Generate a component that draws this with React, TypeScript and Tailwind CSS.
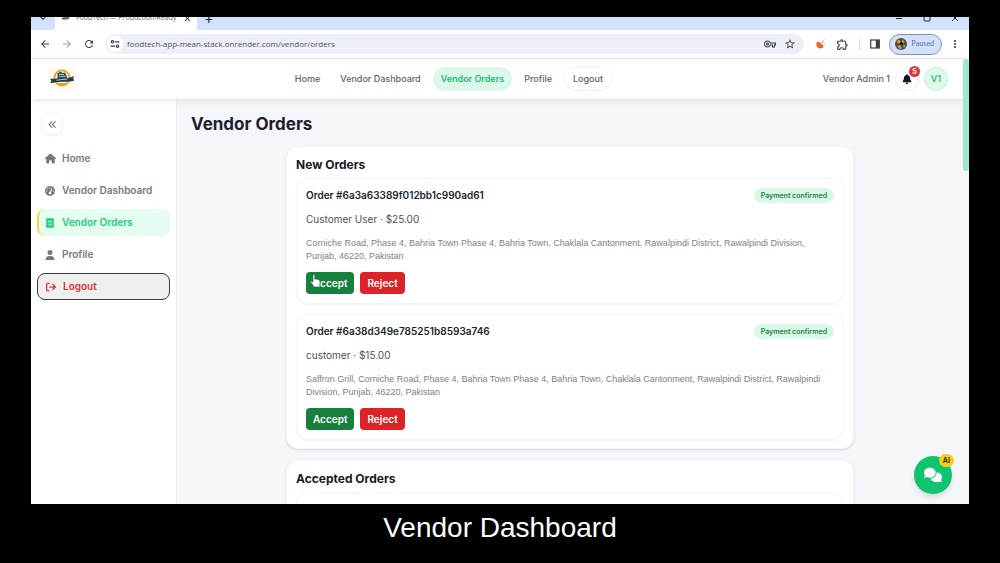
import type { ReactNode } from "react";
import {
  FaAnglesLeft,
  FaArrowRightFromBracket,
  FaBell,
  FaComments,
  FaGaugeHigh,
  FaHouse,
  FaReceipt,
  FaUser,
} from "react-icons/fa6";
import {
  MdArrowBack,
  MdArrowForward,
  MdClose,
  MdKeyboardArrowDown,
  MdMoreVert,
  MdOutlineExtension,
  MdOutlineVpnKey,
  MdRefresh,
  MdStarBorder,
} from "react-icons/md";

type Order = { id: string; customer: string; total: string; address: string };

const newOrders: Order[] = [
  {
    id: "6a3a63389f012bb1c990ad61",
    customer: "Customer User",
    total: "$25.00",
    address:
      "Corniche Road, Phase 4, Bahria Town Phase 4, Bahria Town, Chaklala Cantonment, Rawalpindi District, Rawalpindi Division, Punjab, 46220, Pakistan",
  },
  {
    id: "6a38d349e785251b8593a746",
    customer: "customer",
    total: "$15.00",
    address:
      "Saffron Grill, Corniche Road, Phase 4, Bahria Town Phase 4, Bahria Town, Chaklala Cantonment, Rawalpindi District, Rawalpindi Division, Punjab, 46220, Pakistan",
  },
];

const navLinks = ["Home", "Vendor Dashboard", "Vendor Orders", "Profile"];

const sideLinks = [
  { label: "Home", icon: <FaHouse size={11} /> },
  { label: "Vendor Dashboard", icon: <FaGaugeHigh size={10} /> },
  { label: "Vendor Orders", icon: <FaReceipt size={10} /> },
  { label: "Profile", icon: <FaUser size={10} /> },
];

function Logo({ className }: { className: string }) {
  return (
    <svg viewBox="0 0 28 24" className={className} aria-hidden="true">
      <rect width="28" height="24" fill="#fffbf2" />
      <circle cx="14" cy="11" r="7.6" fill="#fff7e0" stroke="#e9a11f" strokeWidth="1.8" />
      <path d="M9.5 6.500l3-2 2 1.500 2.500-.5 1.500 3 1 3h-10z" fill="#2b5365" />
      <path d="M11 7.500h5M11 9.300h6.500" stroke="#dfe9ec" strokeWidth=".7" />
      <path d="M2 11.500c4 .8 8-.8 12-.5s8 0 12-2l-.8 2.600 1 2c-4 1.400-8 1.200-12 1.200s-8 1-12 1.200l1.200-2.200z" fill="#1f3d4b" />
      <path d="M8.500 13.200c4-.8 7-.6 11-1.200" stroke="#c9d5da" strokeWidth=".9" fill="none" />
      <path d="M9.500 16h9l-2.500 2.300h-4z" fill="#e9a11f" />
    </svg>
  );
}

function TabStrip() {
  return (
    <div className="flex h-[13px] items-end overflow-hidden bg-[#d3e1fb] text-[#5f6368]">
      <div className="flex h-6 w-6 shrink-0 items-center justify-center rounded-br-lg bg-[#d3e1fb]">
        <MdKeyboardArrowDown size={12} className="text-[#30343a]" />
      </div>
      <div className="flex h-6 w-[142px] shrink-0 items-center gap-[6px] rounded-t-lg bg-white pr-[5px] pl-[6px]">
        <Logo className="h-2 w-[9px] shrink-0" />
        <span className="flex-1 font-['Open_Sans',sans-serif] text-[7px] leading-3 whitespace-nowrap">
          FoodTech — Production-Ready
        </span>
        <button type="button" aria-label="Close tab" className="text-[#202124]">
          <MdClose size={9} />
        </button>
      </div>
      <button type="button" aria-label="New tab" className="flex h-6 w-6 items-center justify-center text-sm leading-4 text-[#202124]">
        +
      </button>
      <div className="ml-auto flex h-6 items-center gap-[20px] pr-[10px] text-[#202124]">
        <svg width="8" height="8" viewBox="0 0 8 8" aria-hidden="true">
          <path d="M1 4.500h6" stroke="currentColor" />
        </svg>
        <svg width="8" height="8" viewBox="0 0 8 8" aria-hidden="true">
          <rect x="1" y="1" width="6" height="6" rx="1" fill="none" stroke="currentColor" />
        </svg>
        <svg width="8" height="8" viewBox="0 0 8 8" aria-hidden="true">
          <path d="M1 1l6 6M7 1l-6 6" stroke="currentColor" />
        </svg>
      </div>
    </div>
  );
}

function Toolbar() {
  return (
    <div className="flex h-[29px] items-center border-b border-[#eceef2] bg-white pr-2 pl-2 text-[#3c4043]">
      <div className="flex items-center gap-[10px]">
        <button type="button" aria-label="Back"><MdArrowBack size={12} /></button>
        <button type="button" aria-label="Forward" className="text-[#9aa0a6]"><MdArrowForward size={12} /></button>
        <button type="button" aria-label="Reload"><MdRefresh size={12} /></button>
      </div>
      <div className="ml-[10px] flex h-5 flex-1 items-center rounded-full bg-[#eceff8] pr-2 pl-[2px]">
        <span className="flex size-4 items-center justify-center rounded-full bg-white">
          <svg width="10" height="10" viewBox="0 0 10 10" fill="none" stroke="#3c4043" strokeWidth="1.200" aria-hidden="true">
            <circle cx="2.500" cy="2.800" r="1.200" />
            <path d="M5 2.800h4.500M.5 7.200H5" />
            <circle cx="7.500" cy="7.200" r="1.200" />
          </svg>
        </span>
        <input
          type="text"
          aria-label="Address"
          defaultValue="foodtech-app-mean-stack.onrender.com/vendor/orders"
          className="ml-1 min-w-0 flex-1 bg-transparent font-['Open_Sans',sans-serif] text-[8px] leading-3 text-[#50545a] outline-none"
        />
        <div className="flex items-center gap-2">
          <MdOutlineVpnKey size={12} />
          <MdStarBorder size={12} />
        </div>
      </div>
      <div className="ml-3 flex items-center gap-[10px]">
        <svg width="10" height="10" viewBox="0 0 10 10" aria-hidden="true">
          <path d="M1 3.200C2 2.200 3.500 2.600 4.300 3.800L6.200 5.800C7.600 6.200 8 7.600 7 8.600 5 10.400.6 9.400.3 5.800.2 4.600.4 3.800 1 3.200z" fill="#f0642c" />
          <path d="M5.600 4.600L8 2.200M5.500 1.200h1M8.600 4.400v1M8.500.8h.8" stroke="#f39a6c" strokeWidth="1.100" />
        </svg>
        <MdOutlineExtension size={13} />
        <span className="h-[11px] w-px bg-[#cdd9f5]" />
        <svg width="10" height="10" viewBox="0 0 10 10" aria-hidden="true">
          <rect x=".7" y="1" width="8.600" height="8" fill="none" stroke="currentColor" strokeWidth="1.200" />
          <path d="M5.800 1h3.500v8H5.800z" fill="currentColor" />
        </svg>
      </div>
      <button
        type="button"
        className="ml-[9px] flex h-[21px] items-center gap-1 rounded-full border border-[#7d91bb] bg-[#d3e1fb] pr-[7px] pl-[5px] font-['Liberation_Serif',serif] text-[8px] leading-3 text-[#5470a5]"
      >
        <svg width="12" height="12" viewBox="0 0 12 12" aria-hidden="true">
          <circle cx="6" cy="6" r="6" fill="#5c4a2a" />
          <path d="M1.500 3.500L4 1.500l2 2.500-2.500 1.500zM7 2l2.500 1L9 5.500 7 5z" fill="#c9a24c" />
          <path d="M2 8l3-1 2 3-2 1.500zM8 7l2.500.5L9 10z" fill="#8fa5a8" />
          <circle cx="6.500" cy="5.500" r="1.500" fill="#211b14" />
        </svg>
        Paused
      </button>
      <button type="button" aria-label="Menu" className="ml-[7px]"><MdMoreVert size={12} /></button>
    </div>
  );
}

function Header() {
  return (
    <header className="relative z-10 flex h-10 items-center justify-between bg-white pr-[21px] pl-[17px] text-[9px] leading-3 font-medium text-[#5b616b] shadow-[0_1px_6px_rgba(0,0,0,0.12)]">
      <Logo className="h-6 w-7" />
      <nav className="flex items-center gap-1">
        {navLinks.map((label) => (
          <a
            key={label}
            href="#"
            className={
              label === "Vendor Orders"
                ? "rounded-full bg-[#dcf8ea] px-2 py-[6px] font-semibold text-[#1fb873]"
                : "px-2 py-[6px]"
            }
          >
            {label}
          </a>
        ))}
        <button type="button" className="rounded-full border border-[#f0f1f3] px-2 py-[5px]">Logout</button>
      </nav>
      <div className="flex items-center gap-[5px]">
        <span>Vendor Admin 1</span>
        <button
          type="button"
          aria-label="Notifications"
          className="relative flex size-6 items-center justify-center rounded-full border border-[#eceef1] text-[#111827]"
        >
          <FaBell size={10} />
          <span className="absolute -top-[2px] -right-[2px] flex size-[11px] items-center justify-center rounded-full bg-[#e0353b] text-[7px] leading-none font-bold text-white">
            5
          </span>
        </button>
        <span className="flex size-6 items-center justify-center rounded-full border border-[#c4f1db] bg-[#dff9ec] font-semibold text-[#2fbf7c]">
          V1
        </span>
      </div>
    </header>
  );
}

function Sidebar() {
  return (
    <aside className="w-[146px] shrink-0 border-r border-[#eceef2] bg-white px-[6px] pt-[14px] text-[10px] leading-[13px] font-semibold text-[#75797f]">
      <button
        type="button"
        aria-label="Collapse sidebar"
        className="ml-1 flex size-[22px] items-center justify-center rounded-lg border border-[#f3f4f6] shadow-xs"
      >
        <FaAnglesLeft size={9} />
      </button>
      <nav className="mt-[10px] flex flex-col gap-[5px]">
        {sideLinks.map(({ label, icon }) => (
          <a
            key={label}
            href="#"
            className={
              label === "Vendor Orders"
                ? "flex items-center gap-[6px] rounded-lg border-l-2 border-[#f2d63c] bg-[#e4fdf0] py-[7px] pl-[5px] text-[#1ecb7b]"
                : "flex items-center gap-[6px] rounded-lg border-l-2 border-transparent py-[7px] pl-[5px]"
            }
          >
            <span className="flex w-3 justify-center">{icon}</span>
            {label}
          </a>
        ))}
        <button
          type="button"
          className="flex items-center gap-[6px] rounded-lg border border-[#3a3a3a] bg-[#efefef] py-[6px] pl-[7px] text-[#d93238]"
        >
          <span className="flex w-3 justify-center"><FaArrowRightFromBracket size={10} /></span>
          Logout
        </button>
      </nav>
    </aside>
  );
}

function OrderCard({ order }: { order: Order }) {
  return (
    <article className="rounded-xl border border-[#f3f4f6] bg-white px-[9px] pt-[10px] pb-[9px] text-[10px] leading-[13px] shadow-xs">
      <div className="flex h-[13px] items-center justify-between">
        <h3 className="font-semibold text-[#22262e]">Order #{order.id}</h3>
        <span className="rounded-full bg-[#d8fae5] px-[7px] py-px text-[7px] font-semibold text-[#2c7a4b]">
          Payment confirmed
        </span>
      </div>
      <p className="mt-[11px] text-[#4b5058]">
        {order.customer} · {order.total}
      </p>
      <p className="mt-[11px] pr-2 font-['Liberation_Sans',Arial,sans-serif] text-[9px] text-[#7b8088]">{order.address}</p>
      <div className="mt-[9px] flex gap-[6px] font-semibold text-white">
        <button type="button" className="rounded bg-[#17803d] px-[7px] py-1 leading-[14px]">Accept</button>
        <button type="button" className="rounded bg-[#dc2428] px-[7px] py-1 leading-[14px]">Reject</button>
      </div>
    </article>
  );
}

function Section({ title, children }: { title: string; children: ReactNode }) {
  return (
    <section className="mx-auto mb-[11px] max-w-[568px] rounded-xl border border-[#f4f5f7] bg-white px-[9px] pt-[10px] pb-2 shadow-sm">
      <h2 className="mb-[6px] text-[12px] leading-[15px] font-bold text-[#161a22]">{title}</h2>
      <div className="flex flex-col gap-[10px]">{children}</div>
    </section>
  );
}

export default function App() {
  return (
    <div className="flex h-screen flex-col bg-black font-[Inter,sans-serif]">
      <div className="relative mx-[31px] mt-[17px] flex min-h-0 flex-1 flex-col overflow-hidden bg-white">
        <TabStrip />
        <Toolbar />
        <div className="relative flex min-h-0 flex-1 flex-col">
          <Header />
          <div className="flex min-h-0 flex-1">
            <Sidebar />
            <main className="relative flex-1 overflow-hidden bg-[#f5f6f9] pt-[13px] pr-5 pl-[14px]">
              <h1 className="mb-[10px] text-[17px] leading-6 font-bold text-[#1b2030]">Vendor Orders</h1>
              <Section title="New Orders">
                {newOrders.map((order) => (
                  <OrderCard key={order.id} order={order} />
                ))}
              </Section>
              <Section title="Accepted Orders">
                <article className="h-28 rounded-xl border border-[#f3f4f6] bg-white" />
              </Section>
              {/* pointer hovering the first Accept button */}
              <svg className="absolute top-[175px] left-[133px]" width="11" height="14" viewBox="0 0 11 14" aria-hidden="true">
                <path
                  d="M3 1.500c0-1.300 1.800-1.300 1.800 0v3.700c2 0 5.200.3 5.200 2.300 0 2.500-.4 3.500-1.200 5.500H4.200C3.500 11.500 2 10 1 8.600c-.6-1 .5-1.800 1.300-1L3 8.200z"
                  fill="#fff"
                  stroke="#2f5f40"
                  strokeWidth=".6"
                />
              </svg>
            </main>
          </div>
          <div className="absolute top-0 right-0 z-20 h-28 w-[6px] rounded-full bg-[#a0e8cb]" />
          <button
            type="button"
            aria-label="Open chat"
            className="absolute right-[17px] bottom-[10px] z-20 flex size-[38px] items-center justify-center rounded-full bg-[#10c46f] text-white shadow-md"
          >
            <FaComments size={18} />
            <span className="absolute -top-[2px] -right-[2px] rounded-full bg-[#f9cd14] px-[4px] py-[2px] text-[7px] leading-[9px] font-bold text-[#33300f]">
              AI
            </span>
          </button>
        </div>
      </div>
      <p className="pt-2 pb-[19px] text-center font-['Liberation_Sans',Arial,sans-serif] text-[28px] leading-8 text-white">
        Vendor Dashboard
      </p>
    </div>
  );
}
